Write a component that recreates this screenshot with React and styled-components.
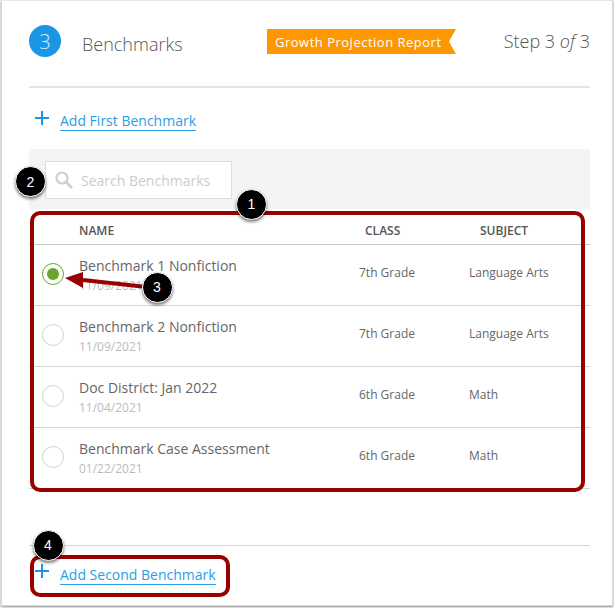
import React from "react";
import styled, { createGlobalStyle } from "styled-components";

const GlobalStyle = createGlobalStyle`
  html, body {
    margin: 0;
    padding: 0;
    background: #fff;
  }
  body {
    min-height: 608px;
    font-family: "Open Sans", "Liberation Sans", sans-serif;
    color: #666;
  }
`;

const Frame = styled.div`
  position: relative;
  box-sizing: border-box;
  width: 612px;
  height: 606px;
  margin-left: 1px;
  padding: 0 22px 0 27px;
  background: #fff;
  border: 1px solid #d6d6d6;
  border-top-color: #e8e8e8;
  box-shadow: 0 1px 2px rgba(0, 0, 0, 0.45);
  overflow: hidden;
`;

const Header = styled.header`
  display: flex;
  align-items: center;
  height: 87px;
  padding-bottom: 5px;
  box-sizing: border-box;
  border-bottom: 2px solid #e5e5e5;
`;

const StepCircle = styled.div`
  display: flex;
  align-items: center;
  justify-content: center;
  width: 32px;
  height: 32px;
  border-radius: 50%;
  background: #1b96e6;
  color: #d8eefc;
  font-size: 20px;
  font-weight: 300;
`;

const Title = styled.h2`
  margin: 5px 0 0 21px;
  width: 185px;
  font-size: 18px;
  font-weight: 300;
  color: #555;
`;

const Banner = styled.div`
  display: flex;
  align-items: center;
  width: 189px;
  height: 25px;
  margin-top: 1px;
  box-sizing: border-box;
  padding-left: 8px;
  background: #ff9800;
  color: #fff;
  font-size: 13px;
  letter-spacing: 0.5px;
  clip-path: polygon(0 0, 100% 0, calc(100% - 7px) 50%, 100% 100%, 0 100%);
`;

const StepCount = styled.div`
  margin-left: auto;
  font-size: 18px;
  font-weight: 300;
  color: #555;
  em {
    font-style: italic;
  }
`;

const AddRow = styled.div`
  display: flex;
  align-items: flex-start;
  gap: 11px;
  padding-left: 6px;
  height: ${(p) => p.$height}px;
  box-sizing: border-box;
  padding-top: ${(p) => p.$top}px;
`;

const AddLink = styled.a`
  font-size: 14px;
  line-height: 19px;
  margin-top: ${(p) => p.$offset}px;
  color: #2a9de8;
  text-decoration: none;
  border-bottom: 1px solid #2a9de8;
  height: 19px;
`;

const SearchBand = styled.div`
  height: 60px;
  box-sizing: border-box;
  padding: 12px 0 0 16px;
  background: #f4f4f4;
`;

const SearchBox = styled.div`
  display: flex;
  align-items: center;
  width: 187px;
  height: 38px;
  box-sizing: border-box;
  padding-left: 9px;
  gap: 8px;
  background: #fff;
  border: 1px solid #ddd;
  color: #ccc;
  font-size: 14px;
`;

const TableHead = styled.div`
  display: grid;
  grid-template-columns: 50px 286px 115px 1fr;
  align-items: center;
  height: 36px;
  padding-top: 8px;
  box-sizing: border-box;
  border-bottom: 1px solid #ccc;
  font-size: 12px;
  font-weight: 600;
  color: #555;
`;

const Row = styled.div`
  display: grid;
  grid-template-columns: 50px 280px 110px 1fr;
  align-items: center;
  height: 61px;
  box-sizing: border-box;
  border-bottom: 1px solid #d4d4d4;
  font-size: 12px;
  color: #666;
`;

const Cell = styled.span`
  padding-bottom: 6px;
`;

const Radio = styled.span`
  display: flex;
  align-items: center;
  justify-content: center;
  width: 22px;
  height: 22px;
  margin: 0 0 3px 13px;
  box-sizing: border-box;
  border-radius: 50%;
  border: 1px solid ${(p) => (p.$checked ? "#6aa628" : "#d2d2d2")};
  &::after {
    content: "";
    display: ${(p) => (p.$checked ? "block" : "none")};
    width: 12px;
    height: 12px;
    border-radius: 50%;
    background: #6aa628;
  }
`;

const NameCell = styled.div`
  display: flex;
  flex-direction: column;
  gap: 1px;
`;

const Name = styled.div`
  font-size: 14px;
  line-height: 20px;
  color: #666;
`;

const DateText = styled.div`
  font-size: 12px;
  line-height: 17px;
  color: #bbb;
`;

const BottomRule = styled.div`
  margin-top: 56px;
  border-top: 1px solid #d4d4d4;
`;

const Callout = styled.div`
  position: absolute;
  left: ${(p) => p.$left}px;
  top: ${(p) => p.$top}px;
  width: ${(p) => p.$width}px;
  height: ${(p) => p.$height}px;
  box-sizing: border-box;
  border: 4px solid #990000;
  border-radius: 10px;
`;

const Badge = styled.div`
  position: absolute;
  left: ${(p) => p.$x - 16}px;
  top: ${(p) => p.$y - 16}px;
  display: flex;
  align-items: center;
  justify-content: center;
  width: 31px;
  height: 31px;
  box-sizing: border-box;
  border-radius: 50%;
  background: #000;
  border: 1px solid #fff;
  color: #fff;
  font-family: "Liberation Sans", Arial, sans-serif;
  font-size: 14px;
  box-shadow: 0 2px 3px rgba(0, 0, 0, 0.5);
`;

const ArrowSvg = styled.svg`
  position: absolute;
  left: 0;
  top: 0;
  pointer-events: none;
`;

const PlusIcon = () => (
  <svg width="14" height="14" viewBox="0 0 14 14" fill="none" stroke="#1b96e6" strokeWidth="2">
    <path d="M7 0v14M0 7h14" />
  </svg>
);

const SearchIcon = () => (
  <svg width="18" height="18" viewBox="0 0 18 18" fill="none" stroke="#cfcfcf">
    <circle cx="7" cy="7" r="5.5" strokeWidth="2.2" />
    <path d="M11 11l6 6" strokeWidth="3" />
  </svg>
);

const rows = [
  { name: "Benchmark 1 Nonfiction", date: "11/09/2021", grade: "7th Grade", subject: "Language Arts", checked: true },
  { name: "Benchmark 2 Nonfiction", date: "11/09/2021", grade: "7th Grade", subject: "Language Arts" },
  { name: "Doc District: Jan 2022", date: "11/04/2021", grade: "6th Grade", subject: "Math" },
  { name: "Benchmark Case Assessment", date: "01/22/2021", grade: "6th Grade", subject: "Math" },
];

export default function App() {
  return (
    <>
      <GlobalStyle />
      <Frame>
        <Header>
          <StepCircle>3</StepCircle>
          <Title>Benchmarks</Title>
          <Banner>Growth Projection Report</Banner>
          <StepCount>
            Step 3 <em>of</em> 3
          </StepCount>
        </Header>
        <AddRow $height={61} $top={23}>
          <PlusIcon />
          <AddLink href="#" $offset={0}>Add First Benchmark</AddLink>
        </AddRow>
        <SearchBand>
          <SearchBox>
            <SearchIcon />
            Search Benchmarks
          </SearchBox>
        </SearchBand>
        <TableHead>
          <span />
          <span>NAME</span>
          <span>CLASS</span>
          <span>SUBJECT</span>
        </TableHead>
        {rows.map((r) => (
          <Row key={r.name}>
            <Radio $checked={r.checked} />
            <NameCell>
              <Name>{r.name}</Name>
              <DateText>{r.date}</DateText>
            </NameCell>
            <Cell>{r.grade}</Cell>
            <Cell>{r.subject}</Cell>
          </Row>
        ))}
        <BottomRule />
        <AddRow $height={50} $top={18}>
          <PlusIcon />
          <AddLink href="#" $offset={1}>Add Second Benchmark</AddLink>
        </AddRow>

        <Callout $left={28} $top={210} $width={555} $height={281} />
        <Callout $left={28} $top={554} $width={200} $height={42} />
        <ArrowSvg width="610" height="604">
          <path d="M140 285.5L81 279" stroke="#990000" strokeWidth="4" fill="none" />
          <path d="M63 277L81 271L81 287Z" fill="#990000" />
        </ArrowSvg>
        <Badge $x={250} $y={203.5}>1</Badge>
        <Badge $x={29} $y={181}>2</Badge>
        <Badge $x={155.5} $y={286.5}>3</Badge>
        <Badge $x={46.5} $y={544.5}>4</Badge>
      </Frame>
    </>
  );
}
